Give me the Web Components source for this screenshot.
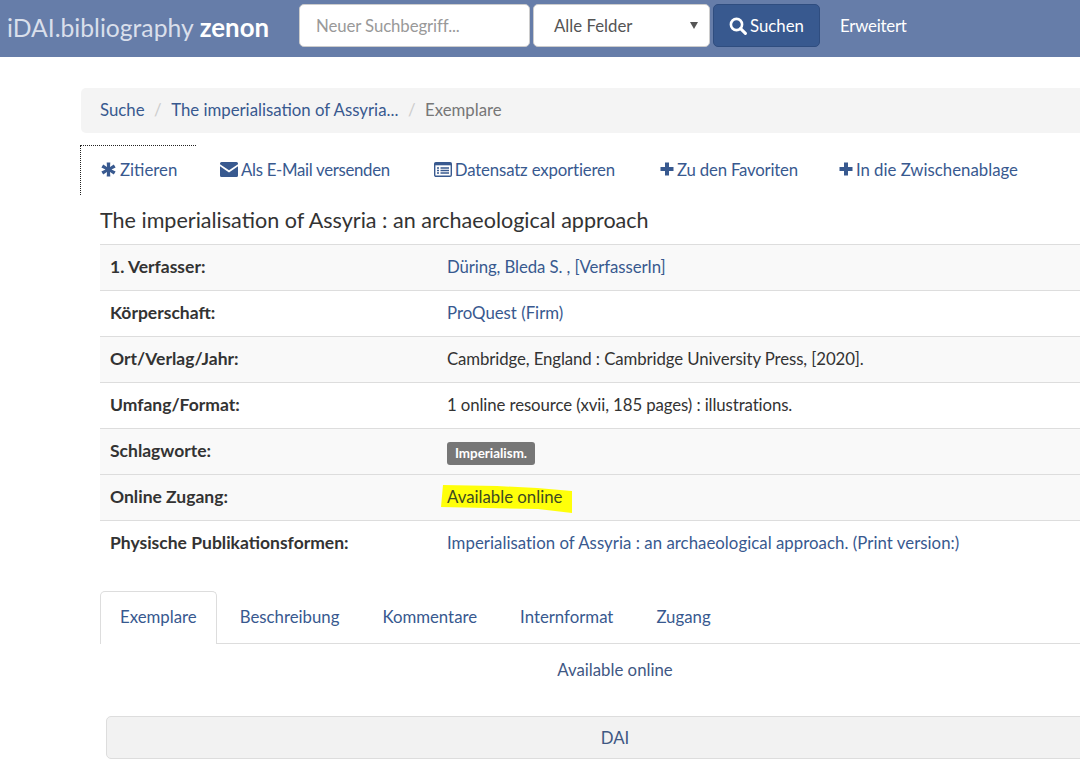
<!DOCTYPE html>
<html lang="de">
<head>
<meta charset="utf-8">
<title>The imperialisation of Assyria</title>
<style>
  html, body { margin: 0; height: 781px; overflow: hidden; background: #fff; }
  body { font: 16.8px/25px Lato, "Noto Sans", sans-serif; color: #333; }
  a { color: inherit; text-decoration: none; }
</style>
</head>
<body>
<script>
const ICONS = {
  search: '<svg width="18" height="18" viewBox="0 0 18 18"><circle cx="7.5" cy="7.5" r="5.6" fill="none" stroke="currentColor" stroke-width="2.6"/><path d="M11.6 11.6 16.4 16.4" stroke="currentColor" stroke-width="3" stroke-linecap="round"/></svg>',
  asterisk: '<svg width="15" height="15" viewBox="0 0 15 15"><path fill="currentColor" d="M5.700 .5h3.600l-.3 4.500 3.800-2.500 1.800 3.100-4.100 1.900 4.100 1.900-1.800 3.100L9 10l.3 4.500H5.700L6 10l-3.800 2.500L.4 9.400l4.100-1.900-4.100-1.900 1.800-3.100L6 5Z"/></svg>',
  envelope: '<svg width="18" height="15" viewBox="0 0 18 15"><path fill="currentColor" d="M1.5 0h15A1.5 1.5 0 0 1 18 1.5v.7L9 8.3 0 2.200V1.500A1.500 1.500 0 0 1 1.500 0Z"/><path fill="currentColor" d="M0 4.300 9 10.400l9-6.100v9.200a1.500 1.500 0 0 1-1.500 1.500h-15A1.500 1.500 0 0 1 0 13.500Z"/></svg>',
  list: '<svg width="18" height="15" viewBox="0 0 18 15"><rect x=".7" y=".7" width="16.600" height="13.600" rx="1.300" fill="none" stroke="currentColor" stroke-width="1.400"/><rect x=".7" y=".7" width="16.600" height="2.600" fill="currentColor"/><path d="M3 6h2M3 8.500h2M3 11h2M6.500 6H15M6.500 8.500H15M6.500 11H15" stroke="currentColor" stroke-width="1.300"/></svg>',
  plus: '<svg width="14" height="14" viewBox="0 0 14 14"><path fill="currentColor" d="M5 .5h4V5h4.500v4H9v4.500H5V9H.5V5H5Z"/></svg>'
};

customElements.define('zenon-icon', class extends HTMLElement {
  connectedCallback() {
    if (this.shadowRoot) return;
    this.attachShadow({ mode: 'open' }).innerHTML = `
      <style>
        :host { display: inline-flex; align-items: center; color: inherit; }
        svg { display: block; }
      </style>
      ${ ICONS[this.getAttribute('name')] || '' }
    `;
  }
});

customElements.define('zenon-navbar', class extends HTMLElement {
  constructor() {
    super();
    this.attachShadow({ mode: 'open' }).innerHTML = `
      <style>
        :host {
          display: flex;
          align-items: flex-start;
          height: 57px;
          box-sizing: border-box;
          padding: 4px 0 0 7px;
          background: #667da9;
        }
        .brand {
          width: 292px;
          height: 43px;
          display: flex;
          align-items: center;
          padding-top: 4px;
          box-sizing: border-box;
          font-size: 24.7px;
          color: #d9dfeb;
          white-space: nowrap;
        }
        .brand b { color: #fff; margin-left: 6px; font-size: 25.8px; font-weight: 700; }
        .field {
          height: 43px;
          box-sizing: border-box;
          display: flex;
          align-items: center;
          background: #fff;
          border: 1px solid #ccc;
          border-radius: 5px;
          color: #555;
        }
        .term { width: 231px; padding-left: 16px; color: #999; letter-spacing: -.1px; }
        .scope { width: 177px; margin-left: 3px; padding: 0 11px 0 20px; justify-content: space-between; }
        .scope i { width: 0; height: 0; border: 4px solid transparent; border-top: 7px solid #555; border-bottom: 0; }
        .go {
          width: 107px;
          height: 43px;
          margin-left: 3px;
          padding-left: 15px;
          box-sizing: border-box;
          display: flex;
          align-items: center;
          gap: 3px;
          background: #38598f;
          border: 1px solid #2f4d7f;
          border-radius: 5px;
          color: #fff;
        }
        .more { margin-left: 20px; height: 43px; display: flex; align-items: center; color: #fff; letter-spacing: -.2px; }
      </style>
      <div class="brand">iDAI.bibliography <b>zenon</b></div>
      <div class="field term">Neuer Suchbegriff...</div>
      <div class="field scope">Alle Felder <i></i></div>
      <div class="go"><zenon-icon name="search"></zenon-icon>Suchen</div>
      <div class="more">Erweitert</div>
    `;
  }
});

customElements.define('zenon-breadcrumb', class extends HTMLElement {
  constructor() {
    super();
    this.attachShadow({ mode: 'open' }).innerHTML = `
      <style>
        :host {
          display: flex;
          align-items: center;
          height: 45px;
          margin: 31px 0 0 81px;
          width: 1100px;
          box-sizing: border-box;
          padding: 0 0 2px 19px;
          background: #f4f4f4;
          border-radius: 5px;
          color: #38598f;
          white-space: nowrap;
        }
        span { color: #ccc; margin: 0 9.5px; }
        em { font-style: normal; color: #777; }
      </style>
      Suche<span>/</span>The imperialisation of Assyria...<span>/</span><em>Exemplare</em>
    `;
  }
});

customElements.define('zenon-toolbar', class extends HTMLElement {
  constructor() {
    super();
    this.attachShadow({ mode: 'open' }).innerHTML = `
      <style>
        :host {
          display: flex;
          height: 50px;
          margin: 12px 0 0 80px;
          color: #38598f;
          white-space: nowrap;
        }
        ::slotted(*) {
          display: flex;
          align-items: center;
          gap: 3px;
          padding: 0 0 2px 0;
          height: 50px;
          box-sizing: border-box;
        }
        ::slotted(.focus) {
          width: 116px;
          gap: 4px;
          padding-left: 20px;
          border-top: 1px dotted #222;
          border-left: 1px dotted #222;
        }
      </style>
      <slot></slot>
    `;
  }
});

customElements.define('zenon-row', class extends HTMLElement {
  constructor() {
    super();
    this.attachShadow({ mode: 'open' }).innerHTML = `
      <style>
        :host {
          display: grid;
          grid-template-columns: 337px 1fr;
          height: 46px;
          box-sizing: border-box;
          padding: 9px 0 0 10px;
          border-top: 1px solid #ddd;
          white-space: nowrap;
        }
        :host([shade]) { background: #f9f9f9; }
        .label { font-weight: 700; font-size: 17.5px; color: #333; }
        .value { color: #333; position: relative; }
      </style>
      <div class="label"><slot name="label"></slot></div>
      <div class="value"><slot></slot></div>
    `;
  }
});

customElements.define('zenon-tabs', class extends HTMLElement {
  constructor() {
    super();
    this.attachShadow({ mode: 'open' }).innerHTML = `
      <style>
        :host {
          display: flex;
          height: 52px;
          margin-top: 25px;
          border-bottom: 1px solid #ddd;
          color: #38598f;
        }
        ::slotted(*) {
          display: flex;
          align-items: center;
          height: 52px;
          padding: 0 21.5px 2px;
          box-sizing: border-box;
        }
        ::slotted(.on) {
          padding: 0 19px 3px;
          margin-right: 1.5px;
          color: #555;
          background: #fff;
          border: 1px solid #ddd;
          border-bottom: 0;
          border-radius: 5px 5px 0 0;
          height: 53px;
        }
      </style>
      <slot></slot>
    `;
  }
});

customElements.define('zenon-record', class extends HTMLElement {
  constructor() {
    super();
    this.attachShadow({ mode: 'open' }).innerHTML = `
      <style>
        :host { display: block; width: 1030px; margin-left: 100px; }
        h1 {
          margin: 0;
          height: 49px;
          font-size: 21.55px;
          line-height: 51px;
          font-weight: 400;
          color: #333;
          white-space: nowrap;
        }
      </style>
      <h1><slot name="title"></slot></h1>
      <div class="table"><slot name="rows"></slot></div>
      <slot></slot>
    `;
  }
});

customElements.define('zenon-holding', class extends HTMLElement {
  constructor() {
    super();
    this.attachShadow({ mode: 'open' }).innerHTML = `
      <style>
        :host { display: block; text-align: center; color: #3f5884; }
        .avail { height: 72px; padding-top: 13px; box-sizing: border-box; }
        .panel {
          margin: 0 6px;
          height: 43px;
          line-height: 41px;
          box-sizing: border-box;
          background: #f2f2f2;
          border: 1px solid #ddd;
          border-radius: 5px;
        }
      </style>
      <div class="avail">Available online</div>
      <div class="panel">DAI</div>
    `;
  }
});

customElements.define('zenon-marker', class extends HTMLElement {
  constructor() {
    super();
    this.attachShadow({ mode: 'open' }).innerHTML = `
      <style>
        :host { display: inline-block; position: relative; color: #3d4a22; }
        svg { position: absolute; left: -10px; top: -7px; }
        span { position: relative; }
      </style>
      <svg width="140" height="40" viewBox="0 0 140 40"><path fill="#ffff0a" d="M6 8 60 9 100 11 135 14 135 36 101 32 50 31 4 30Z"/></svg>
      <span><slot></slot></span>
    `;
  }
});
</script>

<zenon-navbar></zenon-navbar>
<zenon-breadcrumb></zenon-breadcrumb>
<zenon-toolbar>
  <a class="focus"><zenon-icon name="asterisk"></zenon-icon>Zitieren</a>
  <a style="margin-left:24px;letter-spacing:-.3px"><zenon-icon name="envelope"></zenon-icon>Als E-Mail versenden</a>
  <a style="margin-left:44px;letter-spacing:-.15px"><zenon-icon name="list"></zenon-icon>Datensatz exportieren</a>
  <a style="margin-left:45px;letter-spacing:-.2px"><zenon-icon name="plus"></zenon-icon>Zu den Favoriten</a>
  <a style="margin-left:41px"><zenon-icon name="plus"></zenon-icon>In die Zwischenablage</a>
</zenon-toolbar>
<zenon-record>
  <span slot="title">The imperialisation of Assyria : an archaeological approach</span>
  <div slot="rows">
    <zenon-row shade><span slot="label">1. Verfasser:</span><a style="color:#38598f;letter-spacing:-.1px">Düring, Bleda S. , [VerfasserIn]</a></zenon-row>
    <zenon-row><span slot="label">Körperschaft:</span><a style="color:#38598f">ProQuest (Firm)</a></zenon-row>
    <zenon-row shade><span slot="label">Ort/Verlag/Jahr:</span><span style="letter-spacing:-.1px">Cambridge, England : Cambridge University Press, [2020].</span></zenon-row>
    <zenon-row><span slot="label">Umfang/Format:</span><span style="letter-spacing:-.1px">1 online resource (xvii, 185 pages) : illustrations.</span></zenon-row>
    <zenon-row shade><span slot="label">Schlagworte:</span><span style="display:inline-block;background:#777;color:#fff;font-size:13.4px;font-weight:700;line-height:23px;height:23px;padding:0 8px;border-radius:3px;margin-top:4px;vertical-align:top">Imperialism.</span></zenon-row>
    <zenon-row shade><span slot="label">Online Zugang:</span><zenon-marker>Available online</zenon-marker></zenon-row>
    <zenon-row><span slot="label">Physische Publikationsformen:</span><a style="color:#38598f;letter-spacing:.04px">Imperialisation of Assyria : an archaeological approach. (Print version:)</a></zenon-row>
  </div>
  <zenon-tabs>
    <a class="on">Exemplare</a>
    <a>Beschreibung</a>
    <a>Kommentare</a>
    <a>Internformat</a>
    <a>Zugang</a>
  </zenon-tabs>
  <zenon-holding></zenon-holding>
</zenon-record>
</body>
</html>
